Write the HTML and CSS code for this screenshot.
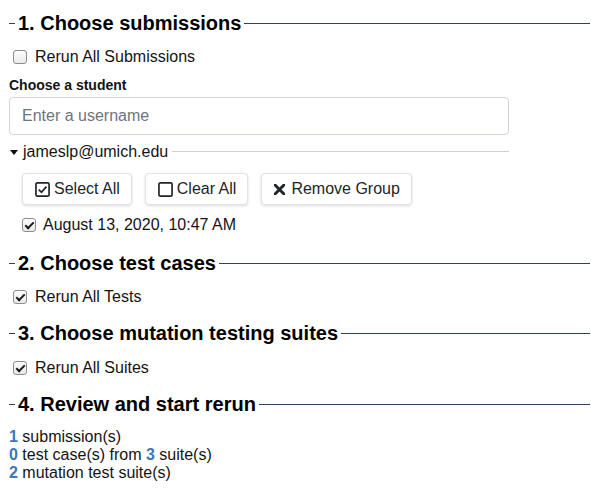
FILE: index.html
```html
<!DOCTYPE html>
<html lang="en">
<head>
<meta charset="utf-8">
<title>Rerun submissions</title>
<link rel="stylesheet" href="styles.css">
</head>
<body>
<div class="page">
  <section class="section">
    <div class="section-title"><span class="dash"></span><h2>1. Choose submissions</h2><span class="rule"></span></div>
    <label class="check-row first"><input type="checkbox" class="cb"><span>Rerun All Submissions</span></label>
    <div class="field-label">Choose a student</div>
    <input type="text" class="text-input" placeholder="Enter a username">
    <div class="group-head">
      <span class="caret"></span><span class="group-name">jameslp@umich.edu</span><span class="group-rule"></span>
    </div>
    <div class="group-body">
      <div class="btn-row">
        <button class="btn"><svg class="ico" viewBox="0 0 16 16" width="15" height="15"><rect x="1" y="1" width="14" height="14" rx="1.5" fill="none" stroke="#212529" stroke-width="1.8"/><path d="M4 8.2 L6.9 11 L12.2 5" fill="none" stroke="#212529" stroke-width="1.9"/></svg><span>Select All</span></button>
        <button class="btn"><svg class="ico" viewBox="0 0 16 16" width="15" height="15"><rect x="1" y="1" width="14" height="14" rx="1.5" fill="none" stroke="#212529" stroke-width="1.8"/></svg><span>Clear All</span></button>
        <button class="btn"><svg class="ico x" viewBox="0 0 12 12" width="11" height="11"><path d="M1 1 L11 11 M11 1 L1 11" stroke="#212529" stroke-width="3.2" stroke-linecap="square"/></svg><span>Remove Group</span></button>
      </div>
      <label class="check-row date"><input type="checkbox" class="cb" checked><span>August 13, 2020, 10:47 AM</span></label>
    </div>
  </section>

  <section class="section s2">
    <div class="section-title"><span class="dash"></span><h2>2. Choose test cases</h2><span class="rule"></span></div>
    <label class="check-row first"><input type="checkbox" class="cb" checked><span>Rerun All Tests</span></label>
  </section>

  <section class="section s3">
    <div class="section-title"><span class="dash"></span><h2>3. Choose mutation testing suites</h2><span class="rule"></span></div>
    <label class="check-row suites"><input type="checkbox" class="cb" checked><span>Rerun All Suites</span></label>
  </section>

  <section class="section s4">
    <div class="section-title"><span class="dash"></span><h2>4. Review and start rerun</h2><span class="rule"></span></div>
    <div class="summary">
      <div><b class="num">1</b> submission(s)</div>
      <div><b class="num">0</b> test case(s) from <b class="num">3</b> suite(s)</div>
      <div><b class="num">2</b> mutation test suite(s)</div>
    </div>
  </section>
</div>
</body>
</html>
```
FILE: styles.css
```css
html, body {
  margin: 0;
  padding: 0;
  background: #fff;
}
body {
  font-family: "Liberation Sans", Arial, sans-serif;
  font-size: 16px;
  color: #141414;
}
.page {
  padding: 11px 1px 0 9px;
}
.section-title {
  display: flex;
  align-items: center;
  height: 24px;
}
.section-title h2 {
  margin: 0;
  padding: 0 3px;
  font-size: 20px;
  font-weight: bold;
  line-height: 24px;
  color: #000;
  white-space: nowrap;
}
.dash {
  width: 6px;
  border-top: 1px solid #2b4263;
}
.rule {
  flex: 1;
  border-top: 1px solid #2b4263;
}
.check-row {
  display: flex;
  align-items: center;
  height: 24px;
  line-height: 24px;
}
.check-row.first { margin-top: 10px; }
.cb {
  -webkit-appearance: none;
  appearance: none;
  position: relative;
  width: 14px;
  height: 14px;
  margin: 0 8px 0 4px;
  border: 1px solid #8d8d8d;
  border-radius: 3px;
  background: linear-gradient(#fdfdfd, #e9e9e9);
  box-sizing: border-box;
  flex: none;
}
.cb:checked::after {
  content: "";
  position: absolute;
  left: 4px;
  top: 1px;
  width: 3px;
  height: 7px;
  border-right: 2.5px solid #1a1a1a;
  border-bottom: 2.5px solid #1a1a1a;
  transform: rotate(45deg);
}
.field-label {
  margin-top: 6px;
  font-size: 14px;
  font-weight: bold;
  line-height: 21px;
}
.text-input {
  display: block;
  margin-top: 1px;
  width: 500px;
  height: 38px;
  box-sizing: border-box;
  padding: 6px 12px;
  border: 1px solid #ced4da;
  border-radius: 4px;
  font-family: inherit;
  font-size: 16px;
  color: #495057;
}
.text-input::placeholder {
  color: #6c757d;
}
.group-head {
  margin-top: 5px;
  width: 500px;
  display: flex;
  align-items: center;
  height: 24px;
}
.caret {
  width: 0;
  height: 0;
  margin: 0 5px 0 1px;
  border-left: 4px solid transparent;
  border-right: 4px solid transparent;
  border-top: 5px solid #111;
}
.group-name {
  white-space: nowrap;
}
.group-rule {
  flex: 1;
  margin-left: 4px;
  margin-top: -2px;
  border-top: 1px solid #cfcfcf;
}
.group-body {
  padding-left: 13px;
}
.btn-row {
  display: flex;
  gap: 13px;
  margin-top: 9px;
}
.btn {
  display: flex;
  align-items: center;
  gap: 4px;
  height: 32px;
  padding: 0 11px 0 12px;
  border: 1px solid #e3e3e3;
  border-radius: 4px;
  background: #fff;
  box-shadow: 0 1px 3px rgba(0, 0, 0, 0.14);
  font-family: inherit;
  font-size: 16px;
  color: #212529;
}
.ico { flex: none; }
.ico.x { margin-right: 2px; }
.check-row.date { margin-top: 8px; }
.check-row.date .cb { margin-left: 0; margin-right: 7px; }
.s2 { margin-top: 14px; }
.s3 { margin-top: 12px; }
.check-row.suites { margin-top: 11px; }
.s4 { margin-top: 12px; }
.summary {
  margin-top: 12px;
  line-height: 18px;
}
.num {
  color: #3a78b8;
}
```
